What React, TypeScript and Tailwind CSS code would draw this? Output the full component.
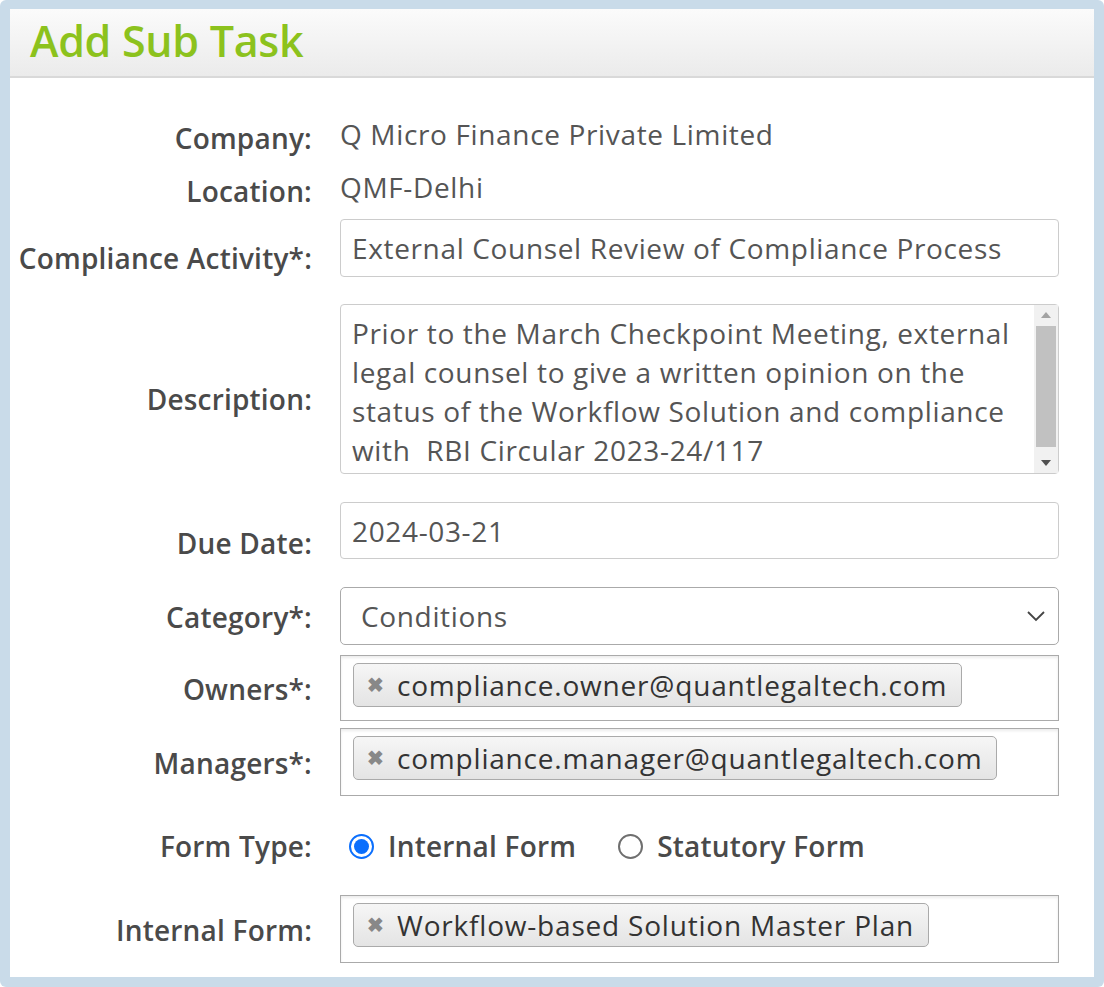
import React from "react";

const font = { fontFamily: '"Open Sans", "Noto Sans", sans-serif' };

function Label({ children, pt }: { children: React.ReactNode; pt: string }) {
  return (
    <div className={`w-[302px] shrink-0 text-right text-[28px] font-semibold leading-[30px] tracking-[0.2px] text-[#4a4a4a] ${pt}`}>
      {children}
    </div>
  );
}

const val = "text-[28px] tracking-[0.65px] text-[#555]";

function Tag({ text }: { text: string }) {
  return (
    <div className="ml-[12px] mt-[7px] inline-flex h-[44px] items-center rounded-[5px] border border-[#aaaaaa] bg-gradient-to-b from-[#f6f6f6] to-[#e4e4e4] pl-[13px] pr-[14px] text-[28px] tracking-[0.8px] text-[#333]">
      <span className="mr-[13px] text-[20px] font-bold leading-none tracking-normal text-[#888]">✖</span>
      <span className="leading-none">{text}</span>
    </div>
  );
}

function TagBox({ text, h }: { text: string; h: string }) {
  return (
    <div className={`w-[719px] border border-[#aaaaaa] bg-white shadow-[inset_0_2px_3px_rgba(0,0,0,0.08)] ${h}`}>
      <Tag text={text} />
    </div>
  );
}

function Radio({ checked }: { checked: boolean }) {
  return checked ? (
    <span className="flex h-[25px] w-[25px] shrink-0 items-center justify-center rounded-full border-[2px] border-[#0b6ffd] bg-white">
      <span className="block h-[15px] w-[15px] rounded-full bg-[#0b6ffd]" />
    </span>
  ) : (
    <span className="block h-[25px] w-[25px] shrink-0 rounded-full border-[2px] border-[#6f6f6f] bg-white" />
  );
}

export default function App() {
  return (
    <div style={font} className="h-[987px] w-[1104px] bg-white">
      <div className="flex h-[987px] w-[1104px] flex-col rounded-[6px] bg-[#c9dbe9] pb-[10px] pl-[10px] pr-[10px] pt-[9px]">
        <div className="flex flex-1 flex-col bg-white">
          <div className="h-[69px] border-b-[2px] border-[#d9d9d9] bg-gradient-to-b from-[#fbfbfb] to-[#ebebeb] pl-[20px] pt-[5px]">
            <h1 className="text-[43px] font-semibold leading-[54px] tracking-[-0.3px] text-[#8cc21d]">Add Sub Task</h1>
          </div>

          {/* Company */}
          <div className="mt-[36px] flex h-[40px] items-center gap-[28px]">
            <Label pt="pt-[8px]">Company:</Label>
            <div className={`leading-[40px] ${val}`}>Q Micro Finance Private Limited</div>
          </div>

          {/* Location */}
          <div className="mt-[13px] flex h-[40px] items-center gap-[28px]">
            <Label pt="pt-[8px]">Location:</Label>
            <div className={`leading-[40px] ${val}`}>QMF-Delhi</div>
          </div>

          {/* Compliance Activity */}
          <div className="mt-[12px] flex h-[58px] items-center gap-[28px]">
            <Label pt="pt-[20px]">Compliance Activity*:</Label>
            <div className={`flex h-[58px] w-[719px] items-center rounded-[4px] border border-[#cccccc] pl-[11px] ${val}`}>
              External Counsel Review of Compliance Process
            </div>
          </div>

          {/* Description */}
          <div className="mt-[27px] flex h-[170px] items-center gap-[28px]">
            <Label pt="pt-[20px]">Description:</Label>
            <div className="flex h-[170px] w-[719px] rounded-[4px] border border-[#cccccc]">
              <div className={`flex-1 whitespace-nowrap pl-[11px] pt-[9px] leading-[39px] ${val}`}>
                <div>Prior to the March Checkpoint Meeting, external</div>
                <div>legal counsel to give a written opinion on the</div>
                <div>status of the Workflow Solution and compliance</div>
                <div>with&nbsp; RBI Circular 2023-24/117</div>
              </div>
              <div className="flex w-[24px] flex-col items-center bg-[#f1f1f1] pb-[6px] pt-[6px]">
                <svg width="12" height="8" viewBox="0 0 12 8"><path d="M1 7 L6 1 L11 7 Z" fill="#a3a3a3" /></svg>
                <div className="mt-[7px] w-[20px] flex-1 bg-[#c1c1c1]" />
                <div className="h-[12px]" />
                <svg width="12" height="8" viewBox="0 0 12 8"><path d="M1 1 L6 7 L11 1 Z" fill="#505050" /></svg>
              </div>
            </div>
          </div>

          {/* Due Date */}
          <div className="mt-[28px] flex h-[57px] items-center gap-[28px]">
            <Label pt="pt-[24px]">Due Date:</Label>
            <div className={`flex h-[57px] w-[719px] items-center rounded-[4px] border border-[#cccccc] pl-[11px] ${val}`}>
              2024-03-21
            </div>
          </div>

          {/* Category */}
          <div className="mt-[28px] flex h-[58px] items-center gap-[28px]">
            <Label pt="pt-[2px]">Category*:</Label>
            <div className={`flex h-[58px] w-[719px] items-center justify-between rounded-[5px] border border-[#aaaaaa] pl-[20px] pr-[12px] ${val}`}>
              <span>Conditions</span>
              <svg width="20" height="12" viewBox="0 0 20 12">
                <path d="M2 2 L10 10 L18 2" fill="none" stroke="#444" strokeWidth="1.8" />
              </svg>
            </div>
          </div>

          {/* Owners */}
          <div className="mt-[10px] flex h-[66px] items-center gap-[28px]">
            <Label pt="pt-[2px]">Owners*:</Label>
            <TagBox text="compliance.owner@quantlegaltech.com" h="h-[66px]" />
          </div>

          {/* Managers */}
          <div className="mt-[7px] flex h-[68px] items-center gap-[28px]">
            <Label pt="pt-[2px]">Managers*:</Label>
            <TagBox text="compliance.manager@quantlegaltech.com" h="h-[68px]" />
          </div>

          {/* Form Type */}
          <div className="mt-[30px] flex h-[40px] items-center gap-[28px]">
            <Label pt="pt-[0px]">Form Type:</Label>
            <div className="flex items-center pl-[9px] text-[28px] font-semibold tracking-[0.2px] text-[#4a4a4a]">
              <Radio checked />
              <span className="ml-[14px]">Internal Form</span>
              <span className="ml-[42px] block"><Radio checked={false} /></span>
              <span className="ml-[14px]">Statutory Form</span>
            </div>
          </div>

          {/* Internal Form */}
          <div className="mt-[29px] flex h-[68px] items-center gap-[28px]">
            <Label pt="pt-[2px]">Internal Form:</Label>
            <TagBox text="Workflow-based Solution Master Plan" h="h-[68px]" />
          </div>
        </div>
      </div>
    </div>
  );
}
